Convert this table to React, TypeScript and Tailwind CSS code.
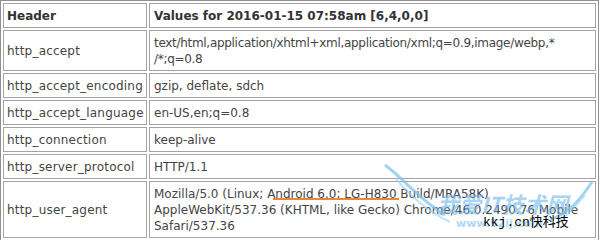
import React from "react";

const rows: { name: string; lines: string[]; tight?: boolean }[] = [
  {
    name: "http_accept",
    lines: [
      "text/html,application/xhtml+xml,application/xml;q=0.9,image/webp,*",
      "/*;q=0.8",
    ],
    tight: true,
  },
  { name: "http_accept_encoding", lines: ["gzip, deflate, sdch"] },
  { name: "http_accept_language", lines: ["en-US,en;q=0.8"] },
  { name: "http_connection", lines: ["keep-alive"] },
  { name: "http_server_protocol", lines: ["HTTP/1.1"] },
  {
    name: "http_user_agent",
    lines: [
      "Mozilla/5.0 (Linux; Android 6.0; LG-H830 Build/MRA58K)",
      "AppleWebKit/537.36 (KHTML, like Gecko) Chrome/46.0.2490.76 Mobile",
      "Safari/537.36",
    ],
  },
];

const cell =
  "border border-[#a3a3a3] pl-[3px] pr-[3px] pt-[4px] pb-[3px] align-middle whitespace-nowrap";

export default function App() {
  return (
    <div className="relative w-[600px] h-[240px] bg-white overflow-hidden font-['DejaVu_Sans',sans-serif] text-[12px] leading-[16px] text-[#444]">
      <table className="w-[599px] table-fixed border-separate border-spacing-[2px] border border-[#8f8f8f]">
        <colgroup>
          <col className="w-[144px]" />
          <col />
        </colgroup>
        <thead>
          <tr>
            <th className={`${cell} text-left font-bold text-[#333]`}>Header</th>
            <th className={`${cell} text-left font-bold text-[#333] pl-[4px]`}>
              Values for 2016-01-15 07:58am [6,4,0,0]
            </th>
          </tr>
        </thead>
        <tbody>
          {rows.map((r) => (
            <tr key={r.name}>
              <td className={`${cell} tracking-[0.2px]`}>{r.name}</td>
              <td className={`${cell} pl-[4px] ${r.tight ? "tracking-[-0.3px]" : ""}`}>
                {r.lines.map((l, i) => (
                  <div key={i}>{l}</div>
                ))}
              </td>
            </tr>
          ))}
        </tbody>
      </table>

      {/* orange highlight under the device name */}
      <div className="absolute left-[273px] top-[198px] w-[126px] h-[2px] bg-[#e8873f]" />

      {/* watermark */}
      <svg
        className="absolute left-[380px] top-[160px] pointer-events-none"
        width="220"
        height="80"
        viewBox="0 0 220 80"
        fill="none"
      >
        <path d="M5 5 C 25 20, 40 40, 65 55" stroke="#7cc0ee" strokeWidth="3" opacity="0.7" />
        <path d="M15 18 C 30 35, 45 50, 70 62" stroke="#9fd2f4" strokeWidth="2" opacity="0.6" />
        <path d="M212 22 C 200 40, 190 52, 170 60" stroke="#7cc0ee" strokeWidth="3" opacity="0.7" />
        <path d="M205 35 C 195 48, 185 58, 172 66" stroke="#9fd2f4" strokeWidth="2" opacity="0.6" />
      </svg>
      <div className="absolute left-[437px] top-[191px] text-[22px] leading-[24px] font-bold italic text-[#6fb8ec] opacity-60 font-['Noto_Sans_CJK_SC',sans-serif] pointer-events-none">
        我爱IT技术网
      </div>
      <div className="absolute left-[456px] top-[218px] text-[11px] leading-[12px] font-bold text-[#7cc0ee] opacity-60 font-['DejaVu_Sans',sans-serif] pointer-events-none">
        www.52ij.com
      </div>
      <div className="absolute left-[483px] top-[215px] text-[13px] leading-[16px] text-black font-['Liberation_Mono','Noto_Sans_CJK_SC',monospace] pointer-events-none">
        kkj.cn快科技
      </div>
    </div>
  );
}
